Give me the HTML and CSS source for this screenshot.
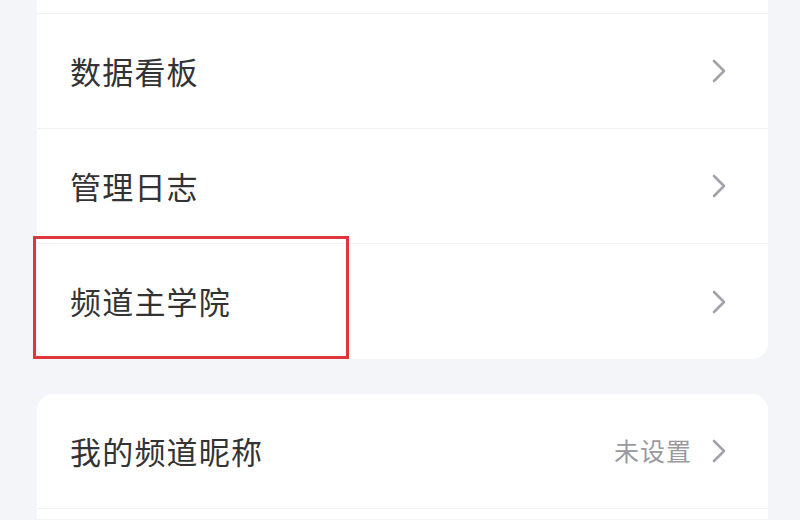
FILE: index.html
```html
<!DOCTYPE html>
<html lang="zh-CN">
<head>
<meta charset="utf-8">
<link rel="stylesheet" href="styles.css">
</head>
<body>
<div class="page">
  <div class="card card-top">
    <div class="stub"></div>
    <div class="row">
      <span class="label">数据看板</span>
      <span class="right"><svg class="chev" viewBox="0 0 14 24"><path d="M2 2 L12 12 L2 22" /></svg></span>
    </div>
    <div class="row">
      <span class="label">管理日志</span>
      <span class="right"><svg class="chev" viewBox="0 0 14 24"><path d="M2 2 L12 12 L2 22" /></svg></span>
    </div>
    <div class="row row-last">
      <span class="label">频道主学院</span>
      <span class="right"><svg class="chev" viewBox="0 0 14 24"><path d="M2 2 L12 12 L2 22" /></svg></span>
      <div class="mark"></div>
    </div>
  </div>
  <div class="card card-bottom">
    <div class="row">
      <span class="label">我的频道昵称</span>
      <span class="right"><span class="value">未设置</span><svg class="chev" viewBox="0 0 14 24"><path d="M2 2 L12 12 L2 22" /></svg></span>
    </div>
    <div class="tail"></div>
  </div>
</div>
</body>
</html>
```

FILE: styles.css
```css
html, body {
  margin: 0;
  padding: 0;
  background: #f4f5f9;
  overflow: hidden;
}
body {
  width: 800px;
  height: 520px;
  font-family: "Noto Sans CJK SC", "Noto Sans", sans-serif;
}
.page {
  padding-left: 37px;
  width: 731px;
  display: flex;
  flex-direction: column;
  gap: 35px;
}
.card {
  background: #fff;
  display: flex;
  flex-direction: column;
}
.card-top {
  border-radius: 0 0 16px 16px;
}
.card-bottom {
  border-radius: 16px 16px 0 0;
}
.stub {
  height: 13px;
  border-bottom: 1px solid #f0f1f4;
}
.tail {
  height: 10px;
}
.row {
  position: relative;
  height: 114px;
  border-bottom: 1px solid #f0f1f4;
  display: flex;
  align-items: center;
  justify-content: space-between;
  padding: 0 42px 0 33px;
}
.row-last {
  border-bottom: none;
  height: 115px;
}
.label {
  font-size: 31px;
  color: #333333;
  letter-spacing: 1.2px;
  line-height: 1;
  margin-top: -2px;
}
.right {
  display: flex;
  align-items: center;
  gap: 20px;
}
.value {
  font-size: 25px;
  color: #9a9a9e;
  letter-spacing: 1px;
  margin-top: -2px;
}
.chev {
  width: 14px;
  height: 24px;
  display: block;
}
.chev path {
  fill: none;
  stroke: #a2a2aa;
  stroke-width: 2.6;
  stroke-linecap: round;
  stroke-linejoin: round;
}
.mark {
  position: absolute;
  left: -4px;
  top: -8px;
  width: 310px;
  height: 117px;
  border: 3px solid #de363c;
}
```
